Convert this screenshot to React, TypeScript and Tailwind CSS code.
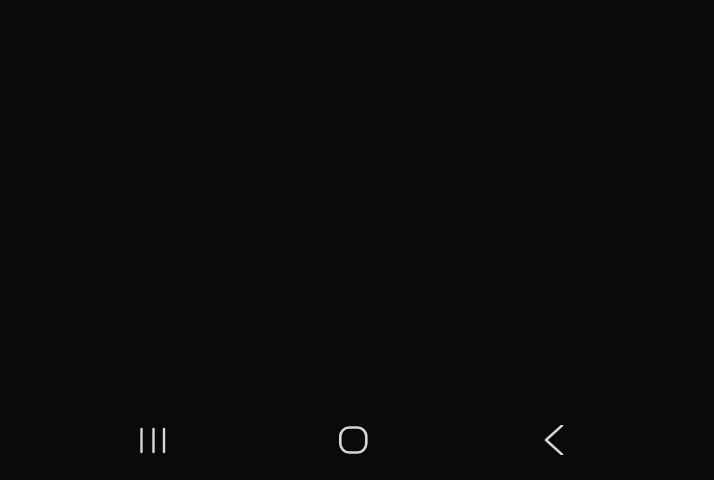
export default function App() {
  return (
    <div className="w-[714px] h-[490px] bg-white">
      <div className="flex h-[480px] flex-col bg-[#0a090c]">
        <div className="flex-1" />
        <nav className="flex h-[80px] items-start pl-[138px] pt-[25px]">
          <div className="flex items-center gap-[170px]">
            {/* recents */}
            <svg width="30" height="30" viewBox="0 0 30 30">
              <g stroke="#d8d8d8" strokeWidth="2.4" strokeLinecap="round">
                <line x1="3.5" y1="4" x2="3.5" y2="27" />
                <line x1="15.5" y1="4" x2="15.5" y2="27" />
                <line x1="26" y1="4" x2="26" y2="27" />
              </g>
            </svg>
            {/* home */}
            <svg width="30" height="30" viewBox="0 0 30 30">
              <rect x="2.3" y="2.5" width="26" height="25" rx="9" fill="none" stroke="#d8d8d8" strokeWidth="2.6" />
            </svg>
            {/* back */}
            <svg width="30" height="30" viewBox="0 0 30 30">
              <polyline points="24,0.5 8,15 24,29.5" fill="none" stroke="#d8d8d8" strokeWidth="2.4" strokeLinecap="round" strokeLinejoin="round" />
            </svg>
          </div>
        </nav>
      </div>
    </div>
  );
}
